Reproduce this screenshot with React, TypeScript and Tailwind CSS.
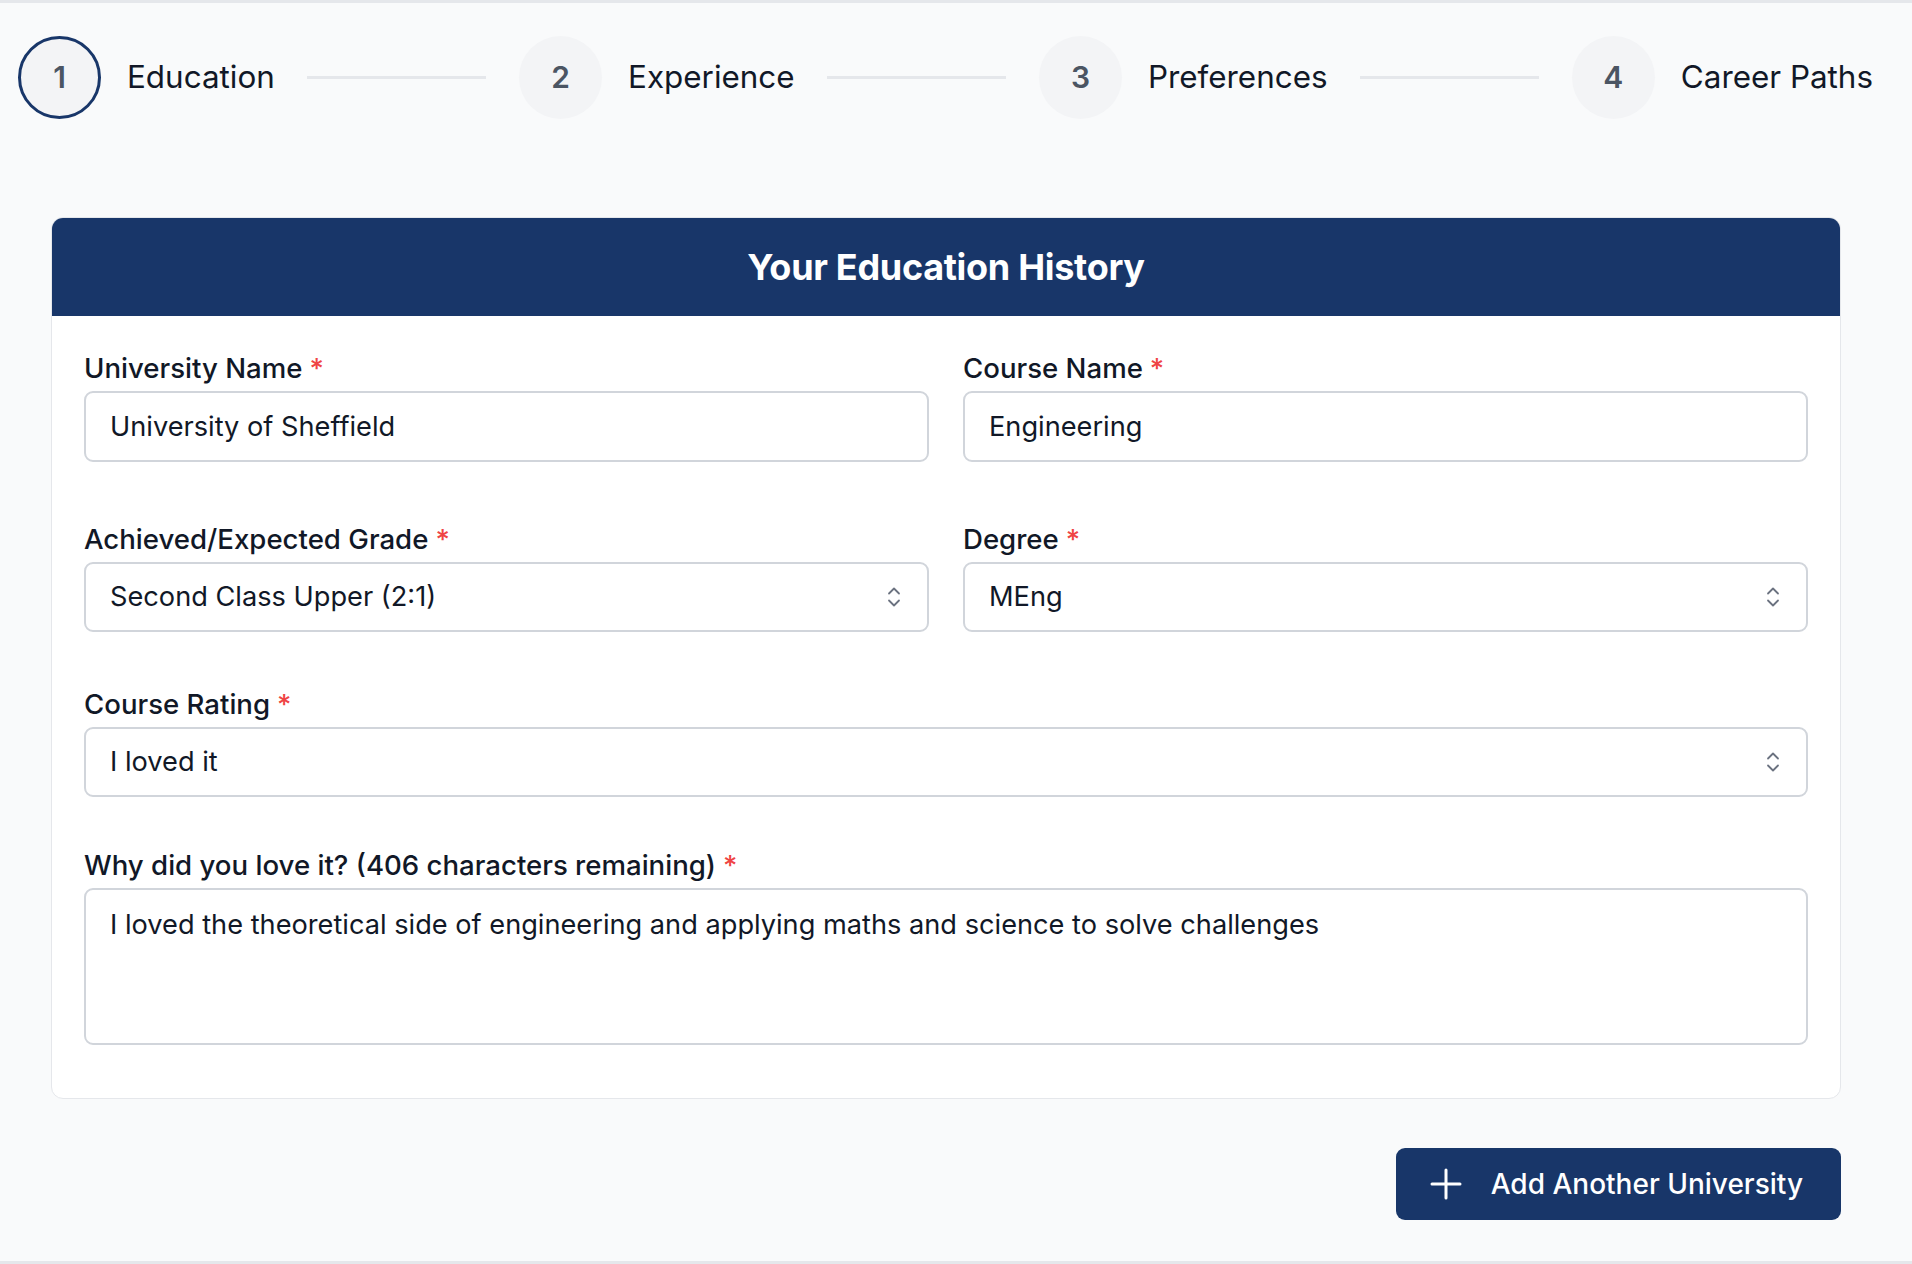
import { Fragment, useState } from 'react'

const steps = [
  { num: 1, label: 'Education', active: true },
  { num: 2, label: 'Experience', active: false },
  { num: 3, label: 'Preferences', active: false },
  { num: 4, label: 'Career Paths', active: false },
]

function ChevronUpDown() {
  return (
    <svg width="16" height="24" viewBox="0 0 16 24" fill="none" className="text-[#6b7280]">
      <path d="M3 8.5 L8 3.5 L13 8.5" stroke="currentColor" strokeWidth="1.8" strokeLinecap="round" strokeLinejoin="round" />
      <path d="M3 15.5 L8 20.5 L13 15.5" stroke="currentColor" strokeWidth="1.8" strokeLinecap="round" strokeLinejoin="round" />
    </svg>
  )
}

function Label({ text }: { text: string }) {
  return (
    <label className="block text-[27.6px] leading-[30px] font-medium text-[#111827] mb-[8px]">
      {text}
      <span className="text-[#ef4444] ml-[7px]">*</span>
    </label>
  )
}

function FakeSelect({ value }: { value: string }) {
  return (
    <div className="flex items-center justify-between h-[70px] border-2 border-[#d1d5db] rounded-[9px] bg-white pl-[24px] pr-[25px]">
      <span className="text-[27.2px] text-[#111827]">{value}</span>
      <ChevronUpDown />
    </div>
  )
}

export default function App() {
  const [university, setUniversity] = useState('University of Sheffield')
  const [course, setCourse] = useState('Engineering')
  const [reason, setReason] = useState(
    'I loved the theoretical side of engineering and applying maths and science to solve challenges'
  )

  return (
    <div className="h-[1264px] flex flex-col bg-[#f9fafb] border-t-[3px] border-b-[3px] border-[#e5e7eb] font-['Inter',sans-serif] overflow-hidden">
      <div className="flex items-center pt-[33px] pl-[18px] pr-[39px]">
        {steps.map((s, i) => (
          <Fragment key={s.num}>
            <div
              className={
                s.active
                  ? 'w-[83px] h-[83px] shrink-0 rounded-full bg-[#f3f4f6] border-[3px] border-[#183669] flex items-center justify-center text-[30px] font-semibold text-[#4b5563]'
                  : 'w-[83px] h-[83px] shrink-0 rounded-full bg-[#f3f4f6] flex items-center justify-center text-[30px] font-semibold text-[#4b5563]'
              }
            >
              {s.num}
            </div>
            <span className="ml-[26px] text-[31.4px] text-[#111827] whitespace-nowrap">{s.label}</span>
            {i < steps.length - 1 && <div className="flex-1 h-[3px] bg-[#e5e7eb] ml-[32px] mr-[33px]" />}
          </Fragment>
        ))}
      </div>

      <div className="pl-[51px] pr-[71px]">
        <div className="mt-[98px] bg-white border border-[#e5e7eb] rounded-[12px] overflow-hidden">
          <div className="h-[98px] bg-[#183669] flex items-center justify-center">
            <h2 className="text-[36px] font-bold text-white tracking-[-0.3px]">Your Education History</h2>
          </div>
          <div className="px-[32px] pt-[37px] pb-[53px]">
            <div className="grid grid-cols-2 gap-x-[34px]">
              <div>
                <Label text="University Name" />
                <input
                  value={university}
                  onChange={(e) => setUniversity(e.target.value)}
                  className="w-full h-[71px] border-2 border-[#d1d5db] rounded-[9px] pl-[24px] text-[27.2px] text-[#111827] outline-none"
                />
              </div>
              <div>
                <Label text="Course Name" />
                <input
                  value={course}
                  onChange={(e) => setCourse(e.target.value)}
                  className="w-full h-[71px] border-2 border-[#d1d5db] rounded-[9px] pl-[24px] text-[27.2px] text-[#111827] outline-none"
                />
              </div>
              <div className="mt-[62px]">
                <Label text="Achieved/Expected Grade" />
                <FakeSelect value="Second Class Upper (2:1)" />
              </div>
              <div className="mt-[62px]">
                <Label text="Degree" />
                <FakeSelect value="MEng" />
              </div>
            </div>
            <div className="mt-[57px]">
              <Label text="Course Rating" />
              <FakeSelect value="I loved it" />
            </div>
            <div className="mt-[53px]">
              <Label text="Why did you love it? (406 characters remaining)" />
              <textarea
                value={reason}
                onChange={(e) => setReason(e.target.value)}
                className="block w-full h-[157px] border-2 border-[#d1d5db] rounded-[9px] pl-[24px] pt-[17px] text-[27.2px] leading-[36px] text-[#111827] outline-none resize-none"
              />
            </div>
          </div>
        </div>

        <div className="flex justify-end mt-[49px]">
          <button
            type="button"
            className="h-[72px] flex items-center bg-[#183669] rounded-[9px] pl-[34px] pr-[38px] text-white text-[28px] font-medium"
          >
            <svg width="32" height="32" viewBox="0 0 32 32" fill="none">
              <path d="M16 2 V30 M2 16 H30" stroke="currentColor" strokeWidth="3" strokeLinecap="round" />
            </svg>
            <span className="ml-[29px]">Add Another University</span>
          </button>
        </div>
      </div>
    </div>
  )
}
